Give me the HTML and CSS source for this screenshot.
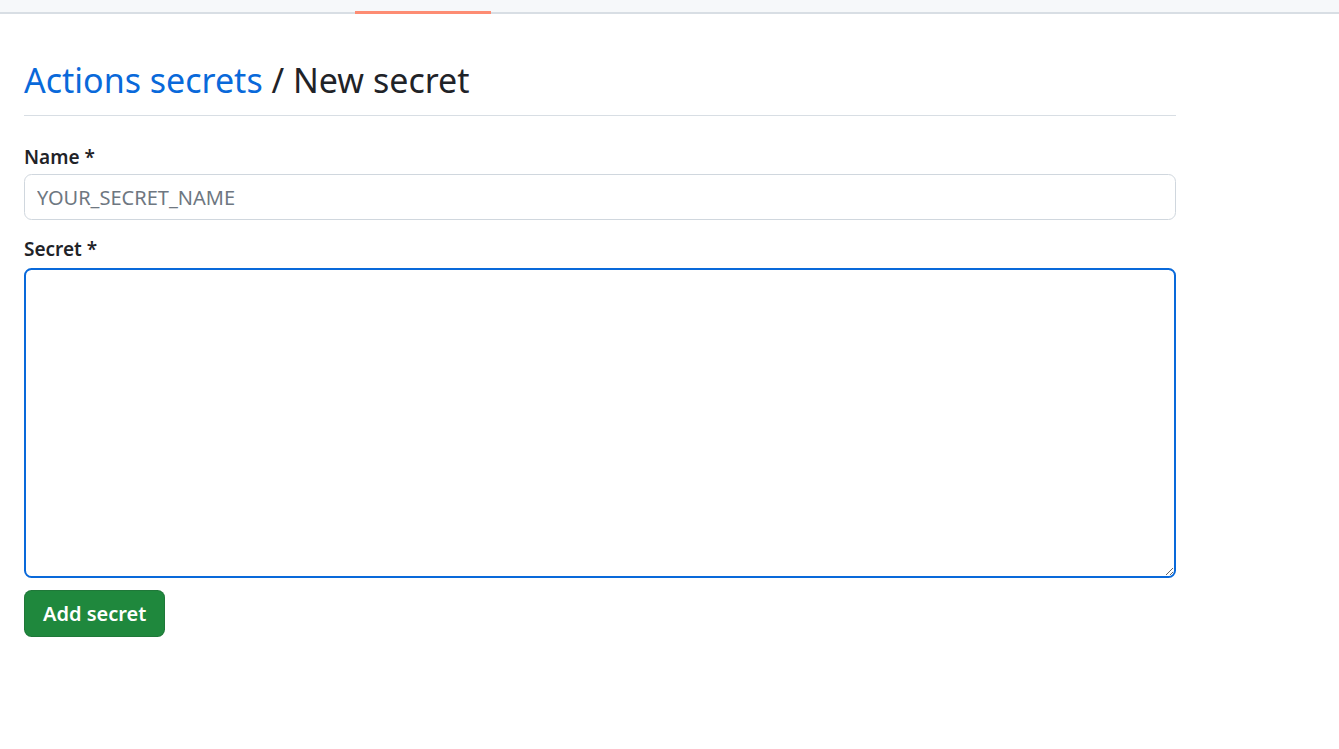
FILE: index.html
```html
<!DOCTYPE html>
<html>
<head>
<meta charset="utf-8">
<link rel="stylesheet" href="styles.css">
</head>
<body>
<div class="topbar"><span class="tab-underline"></span></div>
<main class="container">
  <div class="subhead">
    <h2 class="subhead-heading"><a href="#" class="crumb">Actions secrets</a> / New secret</h2>
  </div>
  <form class="form">
    <div class="form-group">
      <label class="label" for="name">Name *</label>
      <input class="form-control input" id="name" type="text" placeholder="YOUR_SECRET_NAME">
    </div>
    <div class="form-group">
      <label class="label" for="secret">Secret *</label>
      <textarea class="form-control textarea focused" id="secret"></textarea>
    </div>
    <button type="button" class="btn-primary">Add secret</button>
  </form>
</main>
</body>
</html>
```
FILE: styles.css
```css
* { box-sizing: border-box; }
body {
  margin: 0;
  font-family: "Noto Sans", "Open Sans", sans-serif;
  color: #1f2328;
  background: #ffffff;
}
.topbar {
  height: 14px;
  background: #f6f8fa;
  border-bottom: 2px solid #d8dee4;
  position: relative;
}
.tab-underline {
  position: absolute;
  left: 355px;
  width: 136px;
  bottom: -2px;
  height: 3px;
  background: #fd8c73;
}
.container {
  width: 1152px;
  margin-left: 24px;
  padding-top: 44px;
}
.subhead {
  border-bottom: 1px solid #d8dee4;
  padding-bottom: 13px;
  margin-bottom: 29px;
}
.subhead-heading {
  margin: 0;
  font-size: 34px;
  font-weight: 400;
  line-height: 44px;
}
.crumb {
  color: #0969da;
  text-decoration: none;
}
.form-group {
  display: flex;
  flex-direction: column;
  margin-bottom: 17px;
}
.label {
  font-size: 19px;
  font-weight: 600;
  line-height: 24px;
  margin-bottom: 5px;
}
.form-control {
  width: 100%;
  border: 1px solid #d0d7de;
  border-radius: 7.5px;
  padding: 0 12px;
  font-family: inherit;
  font-size: 20px;
  color: #1f2328;
  background: #ffffff;
}
.input { height: 46px; }
.form-control::placeholder { color: #6e7781; }
.textarea {
  margin-top: 2px;
  height: 310px;
  resize: vertical;
}
.focused {
  border: 2px solid #0969da;
  outline: none;
}
.btn-primary {
  margin-top: -5px;
  height: 47px;
  padding: 0 18px;
  background: #1f883d;
  color: #ffffff;
  border: 1px solid rgba(31,35,40,0.15);
  border-radius: 7.5px;
  font-family: inherit;
  font-size: 20px;
  font-weight: 600;
}
```
